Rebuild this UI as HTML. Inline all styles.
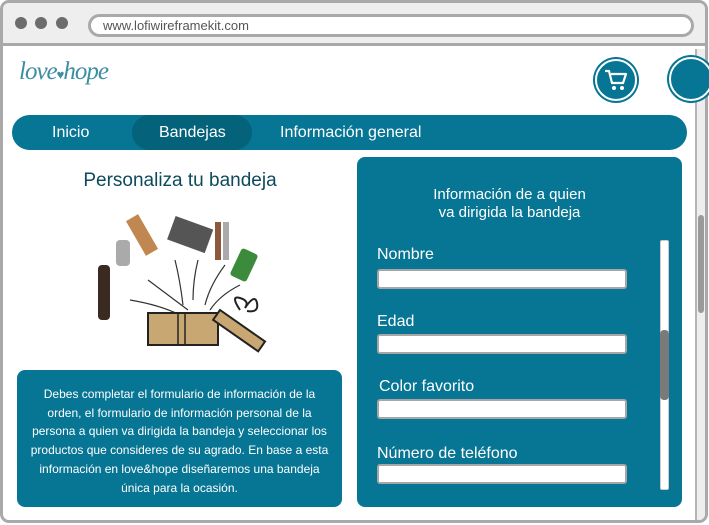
<!DOCTYPE html>
<html><head><meta charset="utf-8"><style>
*{margin:0;padding:0;box-sizing:border-box}
body{width:709px;height:525px;background:#fff;font-family:"Liberation Sans",sans-serif;position:relative;overflow:hidden}
.a{position:absolute}
.frame{left:0;top:0;width:708px;height:523px;border:3px solid #a9a9a9;border-radius:9px;background:#fff;overflow:hidden}
.top{left:0;top:0;width:702px;height:43px;background:#eee;border-bottom:3px solid #a9a9a9}
.dot{width:12px;height:12px;border-radius:50%;background:#6c6c6c;top:14px}
.url{left:85px;top:11px;width:606px;height:23px;border:3px solid #a9a9a9;border-radius:12px;background:#fff;font-size:13px;color:#555;padding-left:12px;line-height:17px}
.teal{background:#077594}
.nav{left:12px;top:115px;width:675px;height:35px;border-radius:18px;color:#fff;font-size:16px}
.in{height:14px;border:2px solid #a6a6a6;border-radius:3px;background:#fff;width:250px;left:377px}
.lbl{color:#fff;font-size:16px;left:377px}
</style></head><body>
<div class="a frame">
 <div class="a top"></div>
 <div class="a dot" style="left:12px"></div><div class="a dot" style="left:32px"></div><div class="a dot" style="left:53px"></div>
 <div class="a url">www.lofiwireframekit.com</div>
 <div class="a" style="left:692px;top:46px;width:12px;height:480px;background:#eee;border-left:2px solid #b5b5b5"></div>
 <div class="a" style="left:695px;top:212px;width:6px;height:98px;background:#9a9a9a;border-radius:3px"></div>
</div>
<div class="a" style="left:19px;top:58px;font-family:'Liberation Serif',serif;font-style:italic;font-size:25px;color:#3d8ea3;letter-spacing:-1px">love<span style="font-size:13px">♥</span>hope</div>
<div class="a" style="left:595px;top:59px;width:42px;height:42px;border-radius:50%;background:#077594;border:2px solid #fff;box-shadow:0 0 0 2px #077594"></div>
<svg class="a" style="left:603px;top:68px" width="26" height="24" viewBox="0 0 26 24"><path d="M2 3h4l3 12h11l3-9H8" fill="none" stroke="#fff" stroke-width="2.2" stroke-linejoin="round"/><circle cx="11" cy="20" r="2" fill="#fff"/><circle cx="19" cy="20" r="2" fill="#fff"/></svg>
<div class="a" style="left:669px;top:57px;width:44px;height:44px;border-radius:50%;background:#077594;border:2px solid #fff;box-shadow:0 0 0 2px #077594"></div>
<div class="a nav teal">
 <div class="a" style="left:120px;top:0;width:120px;height:35px;border-radius:18px;background:#04627a"></div>
 <div class="a" style="left:40px;top:9px">Inicio</div>
 <div class="a" style="left:147px;top:9px">Bandejas</div>
 <div class="a" style="left:268px;top:9px">Información general</div>
</div>
<div class="a" style="left:0;top:170px;width:360px;text-align:center;font-size:19px;color:#0e4a5c">Personaliza tu bandeja</div>
<svg class="a" style="left:90px;top:210px" width="180" height="145" viewBox="0 0 180 145">
 <g fill="none" stroke="#333" stroke-width="1.2">
 <path d="M40 90q30 5 50 15M58 70q20 15 40 30M85 50q5 20 8 45M108 50q-5 20-5 40M135 55q-15 20-20 40M150 75q-20 10-30 25"/></g>
 <rect x="58" y="103" width="70" height="32" fill="#c9a772" stroke="#222" stroke-width="2"/>
 <line x1="88" y1="103" x2="88" y2="135" stroke="#222" stroke-width="1.5"/><line x1="95" y1="103" x2="95" y2="135" stroke="#222" stroke-width="1.5"/>
 <rect x="130" y="100" width="55" height="12" fill="#c9a772" stroke="#222" stroke-width="2" transform="rotate(35 130 100)"/>
 <path d="M150 100q-10-15 0-12t5 10q10-15 12-5t-10 8" fill="none" stroke="#222" stroke-width="2"/>
 <rect x="8" y="55" width="12" height="55" rx="4" fill="#3b2a22"/>
 <rect x="26" y="30" width="14" height="26" rx="4" fill="#aaa"/>
 <rect x="45" y="5" width="14" height="40" fill="#c08850" transform="rotate(-30 52 25)"/>
 <rect x="80" y="12" width="40" height="25" fill="#555" transform="rotate(20 100 25)"/>
 <rect x="125" y="12" width="6" height="38" fill="#8a5a3a"/><rect x="133" y="12" width="6" height="38" fill="#aaa"/>
 <rect x="145" y="40" width="18" height="30" rx="3" fill="#3c8a3c" transform="rotate(25 154 55)"/>
</svg>
<div class="a teal" style="left:17px;top:370px;width:325px;height:137px;border-radius:8px;color:#fff;font-size:12px;line-height:18.7px;text-align:center;padding:15px 0 0;white-space:nowrap">Debes completar el formulario de información de la<br>orden, el formulario de información personal de la<br>persona a quien va dirigida la bandeja y seleccionar los<br>productos que consideres de su agrado. En base a esta<br>información en love&amp;hope diseñaremos una bandeja<br>única para la ocasión.</div>
<div class="a teal" style="left:357px;top:157px;width:325px;height:350px;border-radius:8px"></div>
<div class="a" style="left:357px;top:186px;width:305px;text-align:center;color:#fff;font-size:15px;line-height:18px">Información de a quien<br>va dirigida la bandeja</div>
<div class="a" style="left:660px;top:240px;width:9px;height:250px;background:#fff;border:1px solid #ccc;border-radius:2px"></div>
<div class="a" style="left:660px;top:330px;width:9px;height:70px;background:#7a7a7a;border-radius:4px"></div>
<div class="a lbl" style="top:246px">Nombre</div><div class="a in" style="top:269px;height:20px"></div>
<div class="a lbl" style="top:313px">Edad</div><div class="a in" style="top:334px;height:20px"></div>
<div class="a lbl" style="top:378px;left:379px">Color favorito</div><div class="a in" style="top:399px;height:20px"></div>
<div class="a lbl" style="top:445px">Número de teléfono</div><div class="a in" style="top:464px;height:20px"></div>
</body></html>
